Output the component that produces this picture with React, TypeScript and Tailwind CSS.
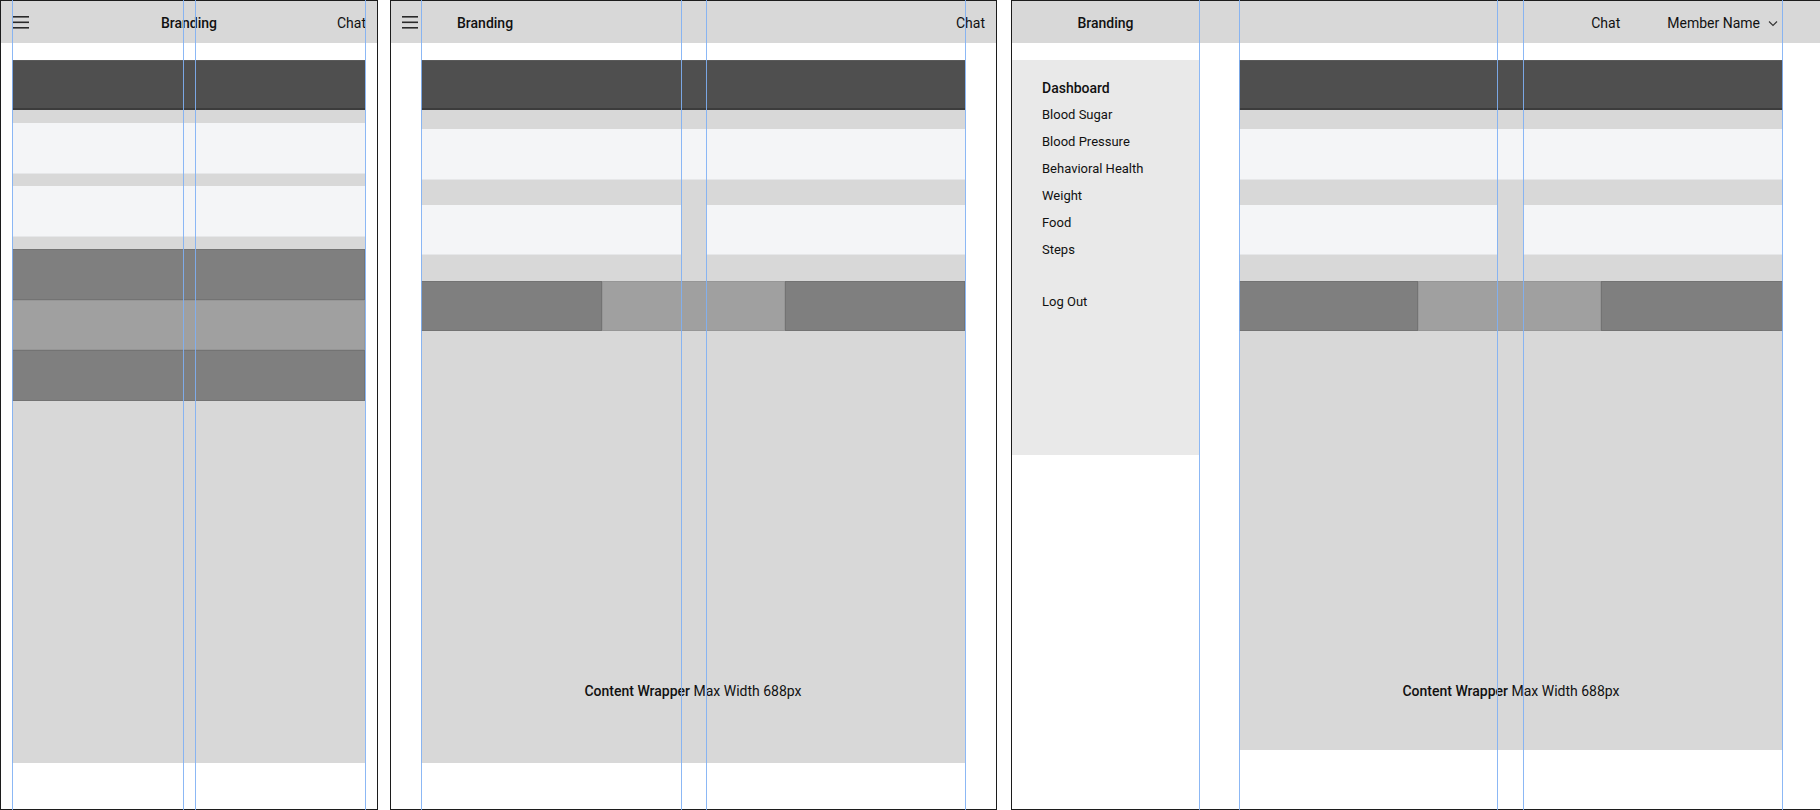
import React from "react";

const Hamburger = () => (
  <svg width="16" height="14" viewBox="0 0 16 14" className="block">
    <rect x="0" y="1" width="16" height="1.6" fill="#2a2a2a" />
    <rect x="0" y="6.5" width="16" height="1.6" fill="#2a2a2a" />
    <rect x="0" y="12" width="16" height="1.6" fill="#2a2a2a" />
  </svg>
);

const Chevron = () => (
  <svg width="10" height="7" viewBox="0 0 10 7" className="block">
    <path d="M1 1.5 L5 5.5 L9 1.5" fill="none" stroke="#333" strokeWidth="1.1" />
  </svg>
);

const Guides = ({ xs }: { xs: number[] }) => (
  <>
    {xs.map((x) => (
      <div
        key={x}
        className="absolute top-[-1px] bottom-[-1px] w-px bg-[#7fb0f4] opacity-90 pointer-events-none"
        style={{ left: x }}
      />
    ))}
  </>
);

const DarkBar = () => (
  <div className="h-[50px] bg-[#4f4f4f] border-t border-[#5a5a5a] border-b-2 border-b-[#3c3c3c]" />
);

const Light = ({ h = "h-[51px]" }: { h?: string }) => (
  <div className={`${h} bg-[#f4f5f7] border-b border-[#e6e7e9]`} />
);

const MidDark = ({ className = "" }: { className?: string }) => (
  <div className={`bg-[#7f7f7f] border border-[#737373] ${className}`} />
);
const MidLight = ({ className = "" }: { className?: string }) => (
  <div className={`bg-[#a0a0a0] border border-[#969696] ${className}`} />
);

const WrapperLabel = () => (
  <div className="flex-1 flex justify-center pt-[350px]">
    <span className="text-[14px] leading-[20px] text-[#111]">
      <span className="font-medium">Content Wrapper</span> Max Width 688px
    </span>
  </div>
);

export default function App() {
  return (
    <div
      className="w-[1820px] h-[810px] bg-white flex items-start overflow-hidden"
      style={{ fontFamily: "Roboto, 'Noto Sans', Arial, sans-serif" }}
    >
      {/* Panel 1 - mobile */}
      <div className="relative w-[378px] h-[810px] border border-[#1c1c1c] shrink-0 flex flex-col">
        <div className="h-[42px] bg-[#d8d8d8] flex items-center pl-[12px] pr-[11px] relative">
          <Hamburger />
          <div className="absolute left-0 right-0 pt-[2px] text-center text-[14px] font-medium text-[#111] pointer-events-none">
            Branding
          </div>
          <span className="ml-auto pt-[2px] text-[14px] text-[#111]">Chat</span>
        </div>
        <div className="ml-[11px] mt-[17px] w-[353px] h-[703px] bg-[#d8d8d8] flex flex-col">
          <DarkBar />
          <div className="mt-[13px]">
            <Light />
          </div>
          <div className="mt-[12px]">
            <Light />
          </div>
          <div className="mt-[12px] flex flex-col">
            <MidDark className="h-[51px]" />
            <MidLight className="h-[50px]" />
            <MidDark className="h-[51px]" />
          </div>
        </div>
        <Guides xs={[11, 182, 194, 364]} />
      </div>

      {/* Panel 2 - tablet */}
      <div className="relative ml-[12px] w-[607px] h-[810px] border border-[#1c1c1c] shrink-0 flex flex-col">
        <div className="h-[42px] bg-[#d8d8d8] flex items-center px-[11px]">
          <Hamburger />
          <span className="ml-[39px] pt-[2px] text-[14px] font-medium text-[#111]">Branding</span>
          <span className="ml-auto pt-[2px] text-[14px] text-[#111]">Chat</span>
        </div>
        <div className="ml-[30px] mt-[17px] w-[544px] h-[703px] bg-[#d8d8d8] flex flex-col">
          <DarkBar />
          <div className="mt-[19px]">
            <Light />
          </div>
          <div className="mt-[25px] flex gap-[25px]">
            <div className="w-[260px]">
              <Light h="h-[50px]" />
            </div>
            <div className="flex-1">
              <Light h="h-[50px]" />
            </div>
          </div>
          <div className="mt-[26px] flex h-[50px]">
            <MidDark className="w-[181px]" />
            <MidLight className="w-[183px]" />
            <MidDark className="flex-1" />
          </div>
          <WrapperLabel />
        </div>
        <Guides xs={[30, 290, 315, 574]} />
      </div>

      {/* Panel 3 - desktop */}
      <div className="relative ml-[14px] w-[809px] h-[810px] border-t border-b border-l border-[#1c1c1c] shrink-0 flex flex-col">
        <div className="h-[42px] bg-[#d8d8d8] flex items-center">
          <div className="w-[187px] pt-[2px] text-center text-[14px] font-medium text-[#111]">Branding</div>
          <span className="ml-auto pt-[2px] text-[14px] text-[#111]">Chat</span>
          <span className="ml-[47px] pt-[2px] text-[14px] text-[#111]">Member Name</span>
          <span className="ml-[8px] mt-[2px]">
            <Chevron />
          </span>
          <span className="w-[42px]" />
        </div>
        <div className="mt-[17px] flex items-start">
          <div className="w-[187px] h-[395px] bg-[#e9e9e9] pl-[30px] pt-[18px] flex flex-col text-[#111]">
            <div className="text-[14px] font-medium leading-[20px]">Dashboard</div>
            <div className="mt-[7px] flex flex-col gap-[7px] text-[13px] leading-[20px]">
              <span>Blood Sugar</span>
              <span>Blood Pressure</span>
              <span>Behavioral Health</span>
              <span>Weight</span>
              <span>Food</span>
              <span>Steps</span>
            </div>
            <div className="mt-[32px] text-[13px] leading-[20px]">Log Out</div>
          </div>
          <div className="ml-[40px] w-[544px] h-[690px] bg-[#d8d8d8] flex flex-col">
            <DarkBar />
            <div className="mt-[19px]">
              <Light />
            </div>
            <div className="mt-[25px] flex gap-[26px]">
              <div className="w-[258px]">
                <Light h="h-[50px]" />
              </div>
              <div className="flex-1">
                <Light h="h-[50px]" />
              </div>
            </div>
            <div className="mt-[26px] flex h-[50px]">
              <MidDark className="w-[179px]" />
              <MidLight className="w-[183px]" />
              <MidDark className="flex-1" />
            </div>
            <WrapperLabel />
          </div>
        </div>
        <Guides xs={[187, 227, 485, 511, 770]} />
      </div>
    </div>
  );
}
